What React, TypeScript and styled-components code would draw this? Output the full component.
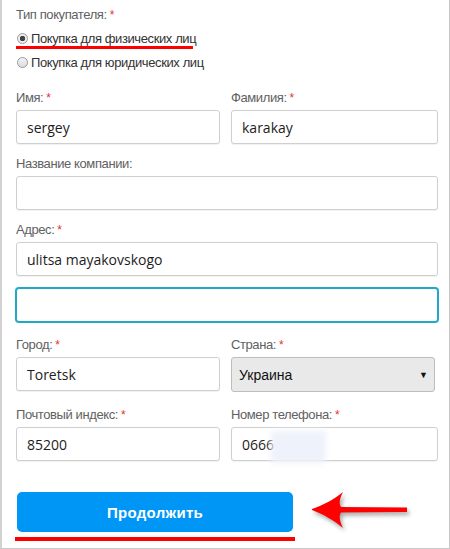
import React from "react";
import styled, { createGlobalStyle } from "styled-components";

const Global = createGlobalStyle`
  html, body { margin: 0; padding: 0; background: #fff; }
  * { box-sizing: border-box; }
`;

const Frame = styled.div`
  position: relative;
  width: 450px;
  height: 549px;
  border-left: 2px solid #d2d2d2;
  border-right: 1px solid #c8c8c8;
  border-bottom: 1px solid #c8c8c8;
  padding: 7px 12px 0 14px;
  font-family: "Liberation Sans", Arial, sans-serif;
  overflow: hidden;
`;

const Label = styled.div`
  font-size: 13px;
  line-height: 15px;
  letter-spacing: -0.4px;
  color: #616161;
  height: 15px;
  margin-bottom: 5px;
  white-space: nowrap;
`;

const Star = styled.span`
  color: #e8302a;
  font-size: 12px;
`;

const RadioList = styled.div`
  display: flex;
  flex-direction: column;
  gap: 8px;
  margin-top: 8px;
`;

const RadioRow = styled.label`
  position: relative;
  display: flex;
  align-items: center;
  gap: 3px;
  height: 16px;
  font-size: 13px;
  letter-spacing: -0.4px;
  color: #333;
`;

const RadioDot = styled.span<{ $checked?: boolean }>`
  width: 11px;
  height: 11px;
  margin-left: 1px;
  border-radius: 50%;
  border: 1px solid #9a9a9a;
  background: ${(p) =>
    p.$checked
      ? "radial-gradient(circle, #444 0 2.5px, #eee 3px)"
      : "linear-gradient(#f4f4f4, #dcdcdc)"};
  flex: none;
`;

const Underline = styled.span<{ $width: number; $thick: number; $top: number; $left: number }>`
  position: absolute;
  left: ${(p) => p.$left}px;
  top: ${(p) => p.$top}px;
  width: ${(p) => p.$width}px;
  height: ${(p) => p.$thick}px;
  background: #ff0000;
`;

const FormGrid = styled.div`
  display: grid;
  grid-template-columns: 204px 207px;
  column-gap: 11px;
  row-gap: 12px;
  margin-top: 20px;
`;

const Field = styled.div<{ $full?: boolean; $extra?: number }>`
  position: relative;
  grid-column: ${(p) => (p.$full ? "1 / -1" : "auto")};
  margin-top: ${(p) => p.$extra ?? 0}px;
`;

const Input = styled.div<{ $focused?: boolean }>`
  height: 34px;
  border: 1px solid ${(p) => (p.$focused ? "#1ea9c9" : "#cfcfcf")};
  box-shadow: ${(p) => (p.$focused ? "0 0 0 1px #1ea9c9" : "0 1px 1px rgba(0,0,0,0.06)")};
  border-radius: 3px;
  background: #fff;
  padding: 0 10px;
  display: flex;
  align-items: center;
  font-family: "Open Sans", sans-serif;
  font-size: 14px;
  color: #1d1d1d;
  overflow: hidden;
`;

const Select = styled.div`
  width: 204px;
  height: 35px;
  border: 1px solid #bdbdbd;
  border-radius: 3px;
  background: #e9e9e9;
  padding: 0 6px 0 7px;
  display: flex;
  align-items: center;
  justify-content: space-between;
  font-family: "Liberation Sans", Arial, sans-serif;
  font-weight: 400;
  font-size: 14px;
  color: #111;
`;

const Caret = styled.span`
  font-size: 9px;
  color: #111;
`;

const Blur = styled.span`
  position: absolute;
  left: 40px;
  top: 24px;
  width: 55px;
  height: 32px;
  background: #eef2fb;
  filter: blur(3px);
`;

const Footer = styled.div`
  position: relative;
  margin-top: 30px;
  display: flex;
  align-items: center;
`;

const Button = styled.button`
  width: 276px;
  height: 40px;
  margin-left: 1px;
  border: none;
  border-radius: 5px;
  background: #0096f6;
  color: #fff;
  font-family: "Liberation Sans", Arial, sans-serif;
  font-weight: bold;
  font-size: 15px;
  letter-spacing: 0.3px;
`;

const Arrow = styled.svg`
  margin-left: 18px;
  filter: drop-shadow(2px 3px 2px rgba(0, 0, 0, 0.35));
`;

type F = { label?: string; req?: boolean; value?: string; full?: boolean; focused?: boolean; extra?: number };

const FieldBox = ({ label, req, value, full, focused, extra }: F) => (
  <Field $full={full} $extra={extra}>
    {label !== undefined && (
      <Label>
        {label}
        {req && <Star> *</Star>}
      </Label>
    )}
    <Input $focused={focused}>{value}</Input>
  </Field>
);

export default function App() {
  return (
    <>
      <Global />
      <Frame>
        <Label>
          Тип покупателя:<Star> *</Star>
        </Label>
        <RadioList>
          <RadioRow>
            <RadioDot $checked />
            Покупка для физических лиц
            <Underline $left={0} $top={16} $width={177} $thick={3} />
          </RadioRow>
          <RadioRow>
            <RadioDot />
            Покупка для юридических лиц
          </RadioRow>
        </RadioList>
        <FormGrid>
          <FieldBox label="Имя:" req value="sergey" />
          <FieldBox label="Фамилия:" req value="karakay" />
          <FieldBox label="Название компании:" full value="" />
          <FieldBox label="Адрес:" req full value="ulitsa mayakovskogo" />
          <FieldBox full focused value="" />
          <FieldBox label="Город:" req value="Toretsk" extra={3} />
          <Field $extra={3}>
            <Label>
              Страна:<Star> *</Star>
            </Label>
            <Select>
              Украина
              <Caret>▼</Caret>
            </Select>
          </Field>
          <FieldBox label="Почтовый индекс:" req value="85200" extra={3} />
          <Field $extra={3}>
            <Label>
              Номер телефона:<Star> *</Star>
            </Label>
            <Input>0666</Input>
            <Blur />
          </Field>
        </FormGrid>
        <Footer>
          <Button>Продолжить</Button>
          <Arrow width="100" height="42" viewBox="0 0 100 42">
            <path
              d="M1 18 C12 14 24 8 32 1 C28 9 28 13 30 16 L96 16.5 L96 21 L30 21.5 C28 25 28 29 32 37 C24 30 12 23 1 19 Z"
              fill="#ff0000"
            />
          </Arrow>
          <Underline $left={-1} $top={46} $width={280} $thick={4} />
        </Footer>
      </Frame>
    </>
  );
}
